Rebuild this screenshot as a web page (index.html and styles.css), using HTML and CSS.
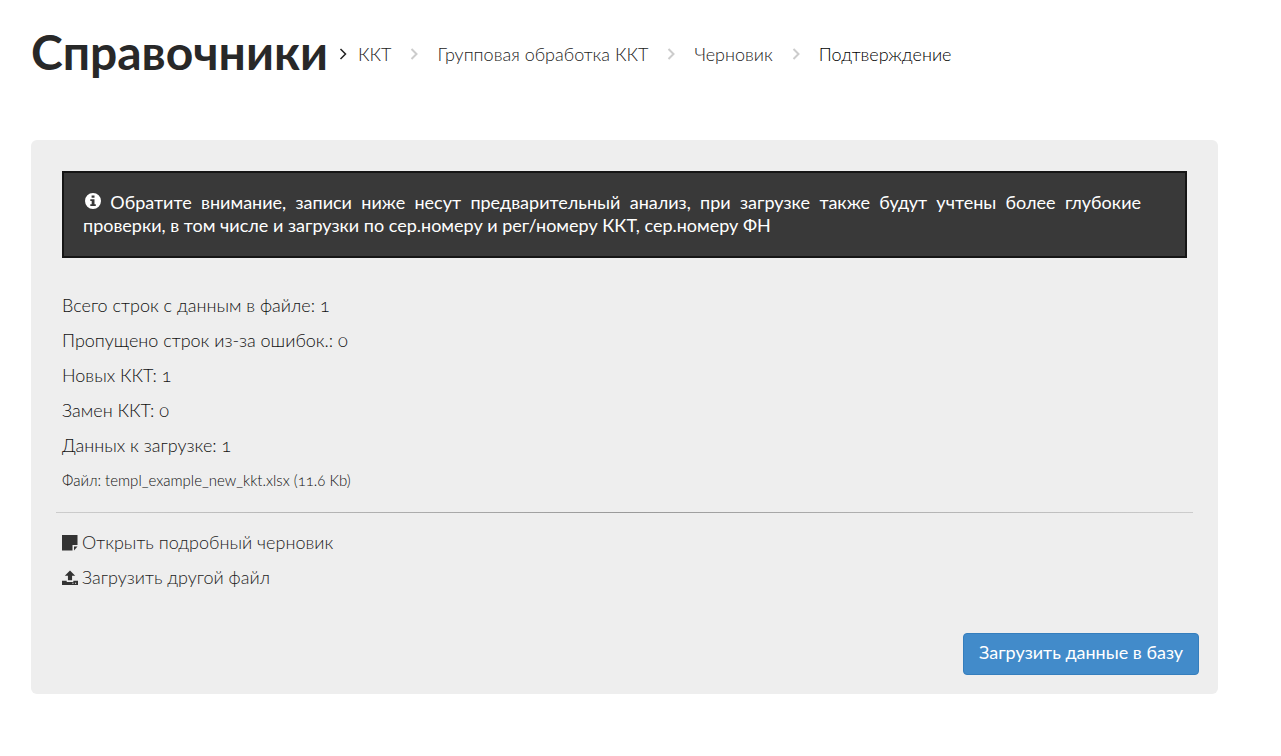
FILE: index.html
```html
<!DOCTYPE html>
<html lang="ru">
<head>
    <meta charset="UTF-8">
    <meta name="viewport" content="width=device-width, initial-scale=1.0">
    <title>Справочники - Подтверждение</title>
    <link rel="stylesheet" href="styles.css">
</head>
<body>

    <header class="page-header">
        <h1>Справочники</h1>
        <svg class="chevron chevron-dark" viewBox="0 0 8 12"><path d="M1.5 1 6.500 6 1.5 11"/></svg>
        <nav class="breadcrumbs">
            <a href="#">ККТ</a>
            <svg class="chevron" viewBox="0 0 8 12"><path d="M1.5 1 6.500 6 1.5 11"/></svg>
            <a href="#">Групповая обработка ККТ</a>
            <svg class="chevron" viewBox="0 0 8 12"><path d="M1.5 1 6.500 6 1.5 11"/></svg>
            <a href="#">Черновик</a>
            <svg class="chevron" viewBox="0 0 8 12"><path d="M1.5 1 6.500 6 1.5 11"/></svg>
            <span class="current">Подтверждение</span>
        </nav>
    </header>

    <main class="panel">
        <div class="notice">
            <svg class="icon-info" viewBox="0 0 16 16"><path fill-rule="evenodd" d="M8 0a8 8 0 1 0 0 16A8 8 0 0 0 8 0zM6.6 2.4h2.9v2.4H6.6zM5.3 6.2h4.2v5h1.3v1.9H5.3v-1.9h1.4V8.1H5.3z"/></svg>
            Обратите внимание, записи ниже несут предварительный анализ, при загрузке также будут учтены более глубокие проверки, в том числе и загрузки по сер.номеру и рег/номеру ККТ, сер.номеру ФН
        </div>

        <div class="summary">
            <p>Всего строк с данным в файле: 1</p>
            <p>Пропущено строк из-за ошибок.: 0</p>
            <p>Новых ККТ: 1</p>
            <p>Замен ККТ: 0</p>
            <p>Данных к загрузке: 1</p>
            <p class="file">Файл: templ_example_new_kkt.xlsx (11.6 Kb)</p>
        </div>

        <hr>

        <div class="links">
            <a href="#">
                <svg class="icon" viewBox="0 0 16 16"><path d="M0 0h15.500v10H10.500v5.500H0zM12 11.500h3.500L12 15.500z"/></svg>
                <span>Открыть подробный черновик</span>
            </a>
            <a href="#">
                <svg class="icon" viewBox="0 0 17 16"><path fill-rule="evenodd" d="M8.500 0 14 5.500h-3.300V10.500H6.300V5.500H3zM0 11h5v1.200h7V11h5v4.500H0zM11 13v1.200h1.200V13zM13.800 13v1.200H15V13z"/></svg>
                <span>Загрузить другой файл</span>
            </a>
        </div>

        <div class="actions">
            <button type="button" class="btn-primary">Загрузить данные в базу</button>
        </div>
    </main>

</body>
</html>
```
FILE: styles.css
```css
body {
    font-family: Lato, "Open Sans", sans-serif;
    font-size: 18px;
    font-weight: 300;
    font-variant-numeric: oldstyle-nums;
    line-height: 25px;
    color: #111;
    background: #fff;
    margin: 0;
    padding: 22px 63px 24px 31px;
}

a {
    color: #222;
    text-decoration: none;
}

a:hover {
    text-decoration: underline;
}

.page-header {
    display: flex;
    align-items: center;
    gap: 11px;
    margin-bottom: 54px;
}

h1 {
    font-size: 48px;
    font-weight: 700;
    line-height: 60px;
    color: #282828;
    margin: 0;
    padding-bottom: 4px;
}

.breadcrumbs {
    display: flex;
    flex-wrap: wrap;
    align-items: center;
    gap: 19px;
}

.current {
    color: #000;
}

.chevron {
    width: 8px;
    height: 12px;
    fill: none;
    stroke: #ccc;
    stroke-width: 2;
}

.chevron-dark {
    stroke: #222;
    stroke-width: 1.5;
}

.panel {
    background: #eee;
    border-radius: 6px;
    padding: 31px 31px 19px;
}

.notice {
    background: #393939;
    border: 2px solid #151515;
    color: #fff;
    font-weight: 400;
    line-height: 23px;
    text-align: justify;
    padding: 18px 44px 19px 19px;
    margin-bottom: 35px;
}

.icon-info {
    width: 16px;
    height: 16px;
    margin-left: 2px;
    fill: #fff;
}

.summary p {
    margin: 0 0 10px;
}

.summary .file {
    font-size: 15px;
}

hr {
    height: 1px;
    border: none;
    background: linear-gradient(to right, #ccc, #999, #ccc);
    margin: 19px -6px 17px;
}

.links {
    display: flex;
    flex-direction: column;
    align-items: flex-start;
    gap: 10px;
    margin-bottom: 43px;
}

.links a {
    display: flex;
    align-items: center;
    gap: 4px;
}

.icon {
    width: 16px;
    height: 16px;
    fill: #333;
}

.actions {
    display: flex;
    justify-content: flex-end;
    margin-right: -12px;
}

.btn-primary {
    font: inherit;
    font-weight: 400;
    color: #fff;
    background: #428bca;
    border: 1px solid #357ebd;
    border-radius: 4px;
    padding: 6px 15px 9px;
    cursor: pointer;
}

.btn-primary:hover {
    background: #3276b1;
}
```
